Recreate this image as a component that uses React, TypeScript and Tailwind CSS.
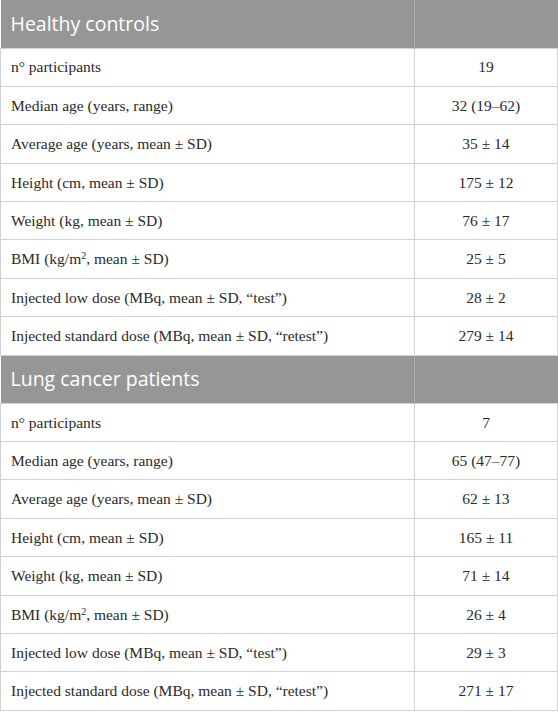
import React from "react";

interface Section {
  title: string;
  rows: [React.ReactNode, string][];
}

const bmi = (
  <>
    BMI (kg/m<sup className="text-[10px]">2</sup>, mean ± SD)
  </>
);

const sections: Section[] = [
  {
    title: "Healthy controls",
    rows: [
      ["n° participants", "19"],
      ["Median age (years, range)", "32 (19–62)"],
      ["Average age (years, mean ± SD)", "35 ± 14"],
      ["Height (cm, mean ± SD)", "175 ± 12"],
      ["Weight (kg, mean ± SD)", "76 ± 17"],
      [bmi, "25 ± 5"],
      ["Injected low dose (MBq, mean ± SD, “test”)", "28 ± 2"],
      ["Injected standard dose (MBq, mean ± SD, “retest”)", "279 ± 14"],
    ],
  },
  {
    title: "Lung cancer patients",
    rows: [
      ["n° participants", "7"],
      ["Median age (years, range)", "65 (47–77)"],
      ["Average age (years, mean ± SD)", "62 ± 13"],
      ["Height (cm, mean ± SD)", "165 ± 11"],
      ["Weight (kg, mean ± SD)", "71 ± 14"],
      [bmi, "26 ± 4"],
      ["Injected low dose (MBq, mean ± SD, “test”)", "29 ± 3"],
      ["Injected standard dose (MBq, mean ± SD, “retest”)", "271 ± 17"],
    ],
  },
];

export default function App() {
  return (
    <div className="w-[558px] h-[713px] bg-white">
      <table className="w-[558px] border-collapse table-fixed">
        <colgroup>
          <col className="w-[414px]" />
          <col />
        </colgroup>
        <tbody>
          {sections.map((section) => (
            <React.Fragment key={section.title}>
              <tr className="h-[48px] bg-[#969696]">
                <td
                  className="border-r border-[#adadad] px-[10px] pb-[1px] text-[19.5px] text-white leading-none"
                  style={{ fontFamily: '"Open Sans", "Noto Sans", sans-serif' }}
                >
                  {section.title}
                </td>
                <td />
              </tr>
              {section.rows.map(([label, value], i) => (
                <tr
                  key={i}
                  className="h-[38.4px] text-[15.5px] text-[#2a2a2a]"
                  style={{ fontFamily: '"Liberation Serif", "Times New Roman", serif' }}
                >
                  <td className="border border-[#d2d2d2] px-[10px] leading-none">{label}</td>
                  <td className="border border-[#d2d2d2] text-center leading-none">{value}</td>
                </tr>
              ))}
            </React.Fragment>
          ))}
        </tbody>
      </table>
    </div>
  );
}
